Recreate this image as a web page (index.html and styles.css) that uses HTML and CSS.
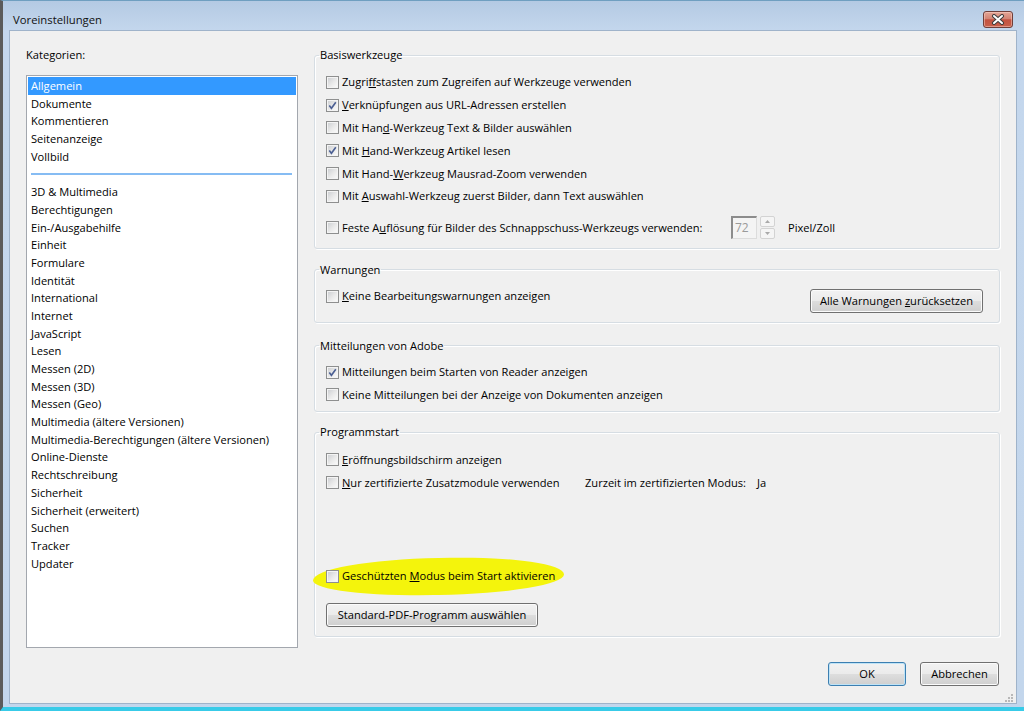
FILE: index.html
```html
<!DOCTYPE html>
<html lang="de">
<head>
<meta charset="utf-8">
<title>Voreinstellungen</title>
<link rel="stylesheet" href="styles.css">
</head>
<body>
<div class="window">
  <div class="titlebar">
    <span class="title">Voreinstellungen</span>
    <span class="close" aria-label="Schließen">
      <svg width="14" height="11" viewBox="0 0 14 11"><path d="M3 2 L11 9 M11 2 L3 9" stroke="#3d3d3d" stroke-width="4" stroke-linecap="round"/><path d="M3 2 L11 9 M11 2 L3 9" stroke="#ffffff" stroke-width="2" stroke-linecap="round"/></svg>
    </span>
  </div>
  <div class="client">
    <div class="main">
      <div class="cats">
        <div class="cats-label">Kategorien:</div>
        <ul class="listbox">
          <li class="sel">Allgemein</li>
          <li>Dokumente</li>
          <li>Kommentieren</li>
          <li>Seitenanzeige</li>
          <li>Vollbild</li>
          <li class="sep"></li>
          <li>3D &amp; Multimedia</li>
          <li>Berechtigungen</li>
          <li>Ein-/Ausgabehilfe</li>
          <li>Einheit</li>
          <li>Formulare</li>
          <li>Identität</li>
          <li>International</li>
          <li>Internet</li>
          <li>JavaScript</li>
          <li>Lesen</li>
          <li>Messen (2D)</li>
          <li>Messen (3D)</li>
          <li>Messen (Geo)</li>
          <li>Multimedia (ältere Versionen)</li>
          <li>Multimedia-Berechtigungen (ältere Versionen)</li>
          <li>Online-Dienste</li>
          <li>Rechtschreibung</li>
          <li>Sicherheit</li>
          <li>Sicherheit (erweitert)</li>
          <li>Suchen</li>
          <li>Tracker</li>
          <li>Updater</li>
        </ul>
      </div>
      <div class="groups">
        <fieldset class="group">
          <legend>Basiswerkzeuge</legend>
          <div class="rows basis">
            <div class="cb"><span class="box"></span><span>Zugri<u>f</u>fstasten zum Zugreifen auf Werkzeuge verwenden</span></div>
            <div class="cb"><span class="box checked"><svg width="9" height="9" viewBox="0 0 9 9"><path d="M1.3 4.6 L3.4 7.3 L7.8 1.2" fill="none" stroke="#4b5f93" stroke-width="1.6"/></svg></span><span><u>V</u>erknüpfungen aus URL-Adressen erstellen</span></div>
            <div class="cb"><span class="box"></span><span>Mit Han<u>d</u>-Werkzeug Text &amp; Bilder auswählen</span></div>
            <div class="cb"><span class="box checked"><svg width="9" height="9" viewBox="0 0 9 9"><path d="M1.3 4.6 L3.4 7.3 L7.8 1.2" fill="none" stroke="#4b5f93" stroke-width="1.6"/></svg></span><span>Mit <u>H</u>and-Werkzeug Artikel lesen</span></div>
            <div class="cb"><span class="box"></span><span>Mit Hand-<u>W</u>erkzeug Mausrad-Zoom verwenden</span></div>
            <div class="cb"><span class="box"></span><span>Mit <u>A</u>uswahl-Werkzeug zuerst Bilder, dann Text auswählen</span></div>
            <div class="spin-row">
              <div class="cb fixed-label"><span class="box"></span><span>Feste A<u>u</u>flösung für Bilder des Schnappschuss-Werkzeugs verwenden:</span></div>
              <span class="spin-input">72</span>
              <span class="spin-arrows">
                <span class="arrow"><svg width="5" height="3" viewBox="0 0 5 3"><path d="M0 3 L2.5 0 L5 3 Z" fill="#a9a9a9"/></svg></span>
                <span class="arrow"><svg width="5" height="3" viewBox="0 0 5 3"><path d="M0 0 L2.5 3 L5 0 Z" fill="#a9a9a9"/></svg></span>
              </span>
              <span class="unit">Pixel/Zoll</span>
            </div>
          </div>
        </fieldset>

        <fieldset class="group g-warn">
          <legend>Warnungen</legend>
          <div class="rows warn">
            <div class="cb"><span class="box"></span><span><u>K</u>eine Bearbeitungswarnungen anzeigen</span></div>
            <span class="btn btn-reset"><span>Alle Warnungen <u>z</u>urücksetzen</span></span>
          </div>
        </fieldset>

        <fieldset class="group g-msg">
          <legend>Mitteilungen von Adobe</legend>
          <div class="rows msg">
            <div class="cb"><span class="box checked"><svg width="9" height="9" viewBox="0 0 9 9"><path d="M1.3 4.6 L3.4 7.3 L7.8 1.2" fill="none" stroke="#4b5f93" stroke-width="1.6"/></svg></span><span>Mitteilungen beim Starten von Reader anzeigen</span></div>
            <div class="cb"><span class="box"></span><span>Keine Mitteilungen bei der Anzeige von Dokumenten anzeigen</span></div>
          </div>
        </fieldset>

        <fieldset class="group g-start">
          <legend>Programmstart</legend>
          <div class="rows start">
            <div class="cb"><span class="box"></span><span><u>E</u>röffnungsbildschirm anzeigen</span></div>
            <div class="cert-row">
              <div class="cb cert-label"><span class="box"></span><span><u>N</u>ur zertifizierte Zusatzmodule verwenden</span></div>
              <span class="cert-mode">Zurzeit im zertifizierten Modus:</span>
              <span>Ja</span>
            </div>
            <div class="cb marked"><span class="box"></span><span>Geschützten <u>M</u>odus beim Start aktivieren</span></div>
            <span class="btn btn-pdf"><span>Standard-PDF-Programm auswählen</span></span>
          </div>
        </fieldset>
      </div>
    </div>
    <div class="footer">
      <span class="btn btn-ok"><span>OK</span></span>
      <span class="btn btn-cancel"><span>Abbrechen</span></span>
    </div>
    <span class="grip">
      <svg width="10" height="10" viewBox="0 0 10 10" fill="#b8b8b8"><rect x="7" y="1" width="2" height="2"/><rect x="4" y="4" width="2" height="2"/><rect x="7" y="4" width="2" height="2"/><rect x="1" y="7" width="2" height="2"/><rect x="4" y="7" width="2" height="2"/><rect x="7" y="7" width="2" height="2"/></svg>
    </span>
  </div>
</div>
</body>
</html>
```
FILE: styles.css
```css
* { box-sizing: border-box; }

html, body {
  margin: 0;
  padding: 0;
  width: 1024px;
  height: 711px;
  overflow: hidden;
}

body {
  font-family: "Open Sans", "Noto Sans", sans-serif;
  font-size: 11.1px;
  color: #000;
}

.window {
  width: 1024px;
  height: 711px;
  display: flex;
  flex-direction: column;
  background: linear-gradient(#b4cae3 0px, #c4d7ed 30px, #c3d6ec 100%);
  border-left: 3px solid #5b5b5b;
  border-top: 1px solid #6f9fc0;
  border-bottom: 4px solid #38cbe8;
}

.titlebar {
  height: 30px;
  flex: none;
  display: flex;
  justify-content: space-between;
  align-items: flex-start;
  padding: 11px 11px 0 10px;
}

.title {
  font-size: 11.3px;
  line-height: 16px;
  color: #111;
}

.close {
  width: 30px;
  height: 17px;
  margin-top: -1px;
  border: 1px solid #6f3f3a;
  border-radius: 3px;
  background: linear-gradient(#e3a596 0%, #d38474 45%, #c35240 52%, #c8604a 100%);
  box-shadow: inset 0 0 0 1px rgba(255, 220, 210, 0.45);
  display: flex;
  align-items: center;
  justify-content: center;
}

.client {
  position: relative;
  flex: 1;
  margin: 0 8px 4px 7px;
  background: #f0f0f0;
  box-shadow: 0 0 0 1px #9fb3ca;
  display: flex;
  flex-direction: column;
}

.main {
  display: grid;
  grid-template-columns: 272px 686px;
  column-gap: 16px;
  padding: 16px 16px 0 16px;
  align-items: start;
}

.cats-label {
  line-height: 16px;
  margin-bottom: 12px;
}

.listbox {
  list-style: none;
  margin: 0;
  padding: 1px;
  height: 573px;
  background: #fff;
  border: 1px solid #a3a7ae;
}

.listbox li {
  height: 17.7px;
  line-height: 17.7px;
  padding-left: 3px;
  white-space: nowrap;
}

.listbox li.sel {
  background: #3399ff;
  color: #fff;
}

.listbox li.sep {
  display: flex;
  align-items: center;
  padding: 0 4px 0 3px;
}

.listbox li.sep::before {
  content: "";
  flex: 1;
  height: 2px;
  background: #86bcf3;
}

.groups {
  display: flex;
  flex-direction: column;
}

.group {
  margin: 0;
  padding: 0;
  min-width: 0;
  border: 1px solid #d6dde3;
  border-radius: 3px;
  box-shadow: inset 1px 1px 0 #ffffff, 1px 1px 0 #ffffff;
}

.group legend {
  margin-left: 4px;
  padding: 0 1px;
  line-height: 16px;
}

.g-warn { margin-top: 13px; }
.g-msg { margin-top: 15px; }
.g-start { margin-top: 12px; }

.rows {
  display: flex;
  flex-direction: column;
  align-items: flex-start;
  padding: 8px 16px 8px 11px;
}

.rows.warn {
  flex-direction: row;
  justify-content: space-between;
  padding: 7px 16px 9px 11px;
}

.rows.msg {
  padding: 7px 16px 5px 11px;
}

.rows.start {
  padding: 8px 16px 9px 11px;
}

.cb {
  display: flex;
  align-items: center;
  height: 22.8px;
  line-height: 16px;
  white-space: nowrap;
}

.box {
  flex: none;
  width: 13px;
  height: 13px;
  margin-right: 3px;
  border: 1px solid #8e8f8f;
  background: #f4f4f4;
  display: flex;
  align-items: center;
  justify-content: center;
  position: relative;
}

.box::before {
  content: "";
  position: absolute;
  left: 1px;
  top: 1px;
  width: 9px;
  height: 9px;
  background: linear-gradient(135deg, #cfd1d4 0%, #eaeaea 55%, #f9f9f9 100%);
}

.box svg {
  position: relative;
}

.spin-row {
  display: flex;
  align-items: center;
  height: 24px;
  margin-top: 8px;
}

.fixed-label {
  width: 405px;
  flex: none;
}

.spin-input {
  width: 26px;
  height: 23px;
  line-height: 19px;
  padding-left: 2px;
  color: #9a9a9a;
  font-size: 12px;
  background: #f4f4f4;
  border-top: 2px solid #8c8c8c;
  border-left: 2px solid #8c8c8c;
  border-right: 1px solid #dcdcdc;
  border-bottom: 1px solid #dcdcdc;
}

.spin-arrows {
  margin-left: 3px;
  width: 15px;
  height: 23px;
  display: flex;
  flex-direction: column;
  gap: 1px;
}

.arrow {
  flex: 1;
  border: 1px solid #d3d3d3;
  border-radius: 2px;
  background: #f5f5f5;
  display: flex;
  align-items: center;
  justify-content: center;
}

.unit {
  margin-left: 13px;
}

.btn {
  display: inline-flex;
  align-items: center;
  justify-content: center;
  height: 24px;
  border: 1px solid #707070;
  border-radius: 3px;
  background: linear-gradient(#f2f2f2 0%, #ebebeb 48%, #dddddd 52%, #cfcfcf 100%);
  box-shadow: inset 0 0 0 1px #fbfbfb;
  white-space: nowrap;
  line-height: 16px;
}

.btn-reset {
  width: 173px;
  margin-top: 4px;
}

.cert-row {
  display: flex;
  align-items: center;
  height: 22.8px;
  white-space: nowrap;
}

.cert-label { width: 259px; flex: none; }
.cert-mode { width: 172px; flex: none; }

.marked {
  margin-top: 71px;
  position: relative;
  isolation: isolate;
}

.marked::before {
  content: "";
  position: absolute;
  z-index: -1;
  left: -13px;
  right: -9px;
  top: -7px;
  bottom: -7px;
  background: #f4f40c;
  border-radius: 50% 45% 50% 48% / 55% 50% 50% 45%;
  transform: rotate(-1deg);
}

.btn-pdf {
  width: 212px;
  margin-top: 15px;
}

.footer {
  display: flex;
  justify-content: flex-end;
  gap: 14px;
  margin-top: 14px;
  padding-right: 17px;
}

.btn-ok {
  width: 78px;
  border-color: #3c7fb1;
  box-shadow: inset 0 0 0 1px #bfe3f6;
}

.btn-cancel {
  width: 79px;
}

.grip {
  position: absolute;
  right: 2px;
  bottom: 2px;
  width: 10px;
  height: 10px;
}
```
